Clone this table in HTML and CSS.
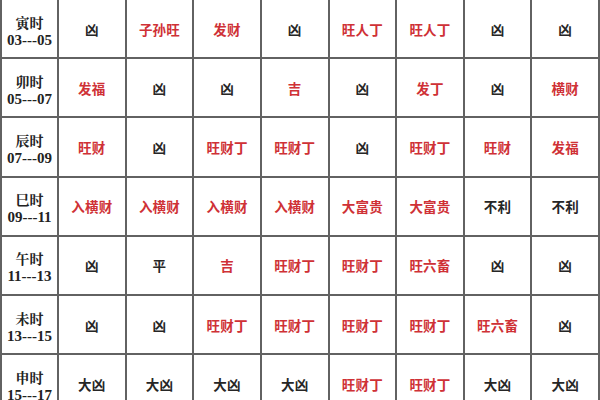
FILE: index.html
```html
<!DOCTYPE html>
<html lang="zh-CN">
<head>
<meta charset="utf-8">
<title>时辰吉凶表</title>
<link rel="stylesheet" href="styles.css">
</head>
<body>
<div class="table">
  <div class="time"><span class="zh">寅时</span><span class="num">03---05</span></div>
  <div class="cell">凶</div>
  <div class="cell red">子孙旺</div>
  <div class="cell red">发财</div>
  <div class="cell">凶</div>
  <div class="cell red">旺人丁</div>
  <div class="cell red">旺人丁</div>
  <div class="cell">凶</div>
  <div class="cell">凶</div>

  <div class="time"><span class="zh">卯时</span><span class="num">05---07</span></div>
  <div class="cell red">发福</div>
  <div class="cell">凶</div>
  <div class="cell">凶</div>
  <div class="cell red">吉</div>
  <div class="cell">凶</div>
  <div class="cell red">发丁</div>
  <div class="cell">凶</div>
  <div class="cell red">横财</div>

  <div class="time"><span class="zh">辰时</span><span class="num">07---09</span></div>
  <div class="cell red">旺财</div>
  <div class="cell">凶</div>
  <div class="cell red">旺财丁</div>
  <div class="cell red">旺财丁</div>
  <div class="cell">凶</div>
  <div class="cell red">旺财丁</div>
  <div class="cell red">旺财</div>
  <div class="cell red">发福</div>

  <div class="time"><span class="zh">巳时</span><span class="num">09---11</span></div>
  <div class="cell red">入横财</div>
  <div class="cell red">入横财</div>
  <div class="cell red">入横财</div>
  <div class="cell red">入横财</div>
  <div class="cell red">大富贵</div>
  <div class="cell red">大富贵</div>
  <div class="cell">不利</div>
  <div class="cell">不利</div>

  <div class="time"><span class="zh">午时</span><span class="num">11---13</span></div>
  <div class="cell">凶</div>
  <div class="cell">平</div>
  <div class="cell red">吉</div>
  <div class="cell red">旺财丁</div>
  <div class="cell red">旺财丁</div>
  <div class="cell red">旺六畜</div>
  <div class="cell">凶</div>
  <div class="cell">凶</div>

  <div class="time"><span class="zh">未时</span><span class="num">13---15</span></div>
  <div class="cell">凶</div>
  <div class="cell">凶</div>
  <div class="cell red">旺财丁</div>
  <div class="cell red">旺财丁</div>
  <div class="cell red">旺财丁</div>
  <div class="cell red">旺财丁</div>
  <div class="cell red">旺六畜</div>
  <div class="cell">凶</div>

  <div class="time"><span class="zh">申时</span><span class="num">15---17</span></div>
  <div class="cell">大凶</div>
  <div class="cell">大凶</div>
  <div class="cell">大凶</div>
  <div class="cell">大凶</div>
  <div class="cell red">旺财丁</div>
  <div class="cell red">旺财丁</div>
  <div class="cell">大凶</div>
  <div class="cell">大凶</div>
</div>
</body>
</html>
```

FILE: styles.css
```css
html, body {
  margin: 0;
  padding: 0;
  background: #ffffff;
  overflow: hidden;
}

.table {
  width: 600px;
  box-sizing: border-box;
  margin-top: -2px;
  padding: 2px;
  background: #626262;
  display: grid;
  grid-template-columns: 55px repeat(8, 1fr);
  grid-auto-rows: 57.2px;
  gap: 2px;
  font-family: "Noto Sans CJK SC", "Liberation Sans", sans-serif;
}

.cell,
.time {
  background: #ffffff;
  display: flex;
  align-items: center;
  justify-content: center;
}

.cell {
  font-size: 13.5px;
  font-weight: 700;
  color: #262626;
  letter-spacing: 0.2px;
}

.cell.red {
  color: #cf3136;
}

.time {
  flex-direction: column;
  color: #222222;
  font-weight: 700;
  line-height: 18px;
  padding-top: 4px;
  box-sizing: border-box;
}

.time .zh {
  font-family: "Noto Serif CJK SC", "Noto Sans CJK SC", serif;
  font-size: 14px;
}

.time .num {
  font-family: "Liberation Serif", serif;
  font-size: 15px;
}
```
